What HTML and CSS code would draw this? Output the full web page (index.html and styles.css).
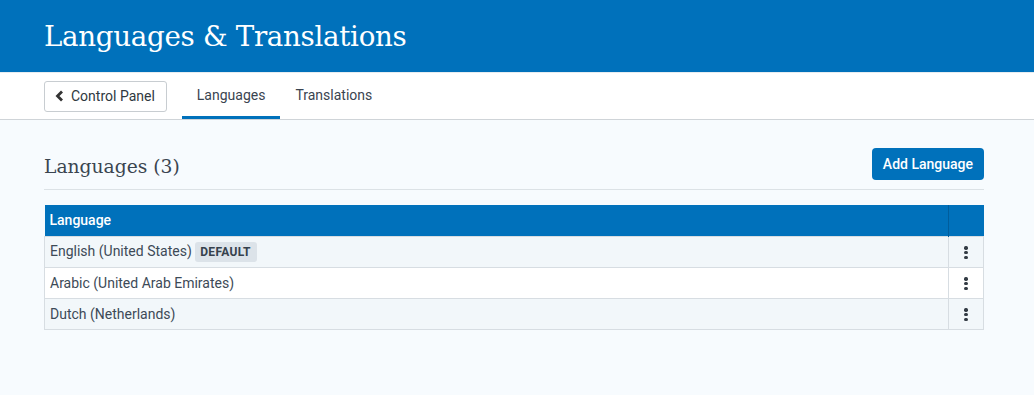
FILE: index.html
```html
<!DOCTYPE html>
<html lang="en">
<head>
  <meta charset="UTF-8" />
  <title>Languages &amp; Translations</title>
  <link rel="stylesheet" href="styles.css">
</head>
<body>

  <header class="page-header">
    <h1>Languages &amp; Translations</h1>
  </header>

  <nav class="tabs">
    <a class="back-btn" href="#">
      <svg width="10" height="12" viewBox="0 0 10 12"><path d="M7 1.5 L2.5 6 L7 10.5" fill="none" stroke="#333" stroke-width="2.8"/></svg>
      Control Panel
    </a>
    <a class="tab active" href="#">Languages</a>
    <a class="tab" href="#">Translations</a>
  </nav>

  <main class="content">
    <div class="section-head">
      <h2>Languages (3)</h2>
      <button class="btn-primary">Add Language</button>
    </div>

    <table class="grid">
      <thead>
        <tr><th>Language</th><th class="actions"></th></tr>
      </thead>
      <tbody>
        <tr>
          <td>English (United States) <span class="badge">DEFAULT</span></td>
          <td class="actions"><span class="kebab"><i></i><i></i><i></i></span></td>
        </tr>
        <tr>
          <td>Arabic (United Arab Emirates)</td>
          <td class="actions"><span class="kebab"><i></i><i></i><i></i></span></td>
        </tr>
        <tr>
          <td>Dutch (Netherlands)</td>
          <td class="actions"><span class="kebab"><i></i><i></i><i></i></span></td>
        </tr>
      </tbody>
    </table>
  </main>

</body>
</html>
```

FILE: styles.css
```css
body {
  margin: 0;
  font-family: Roboto, "Liberation Sans", sans-serif;
  font-size: 14px;
  color: #3d4a57;
  background: #f7fbfe;
}
.page-header {
  background: #0071bb;
  height: 72px;
  padding: 0 44px;
  display: flex;
  align-items: center;
}
.page-header h1 {
  margin: 0;
  color: #fff;
  font-family: "DejaVu Serif", serif;
  font-weight: normal;
  font-size: 27.7px;
  letter-spacing: -0.3px;
}
.tabs {
  background: #fff;
  height: 46px;
  border-top: 1px solid #e6ecf0;
  border-bottom: 1px solid #cfd4d8;
  padding: 0 44px;
  display: flex;
  align-items: center;
}
.back-btn {
  display: flex;
  align-items: center;
  gap: 6px;
  height: 29px;
  padding: 0 11px 0 10px;
  border: 1px solid #c8cdd1;
  border-radius: 3px;
  color: #2f3840;
  text-decoration: none;
  font-size: 14px;
  margin-right: 15px;
}
.tab {
  height: 46px;
  display: flex;
  align-items: center;
  padding: 0 15px;
  color: #3a4450;
  text-decoration: none;
  box-sizing: border-box;
  border-bottom: 3px solid transparent;
  padding-top: 1px;
}
.tab.active {
  border-bottom-color: #0071bb;
}
.content {
  padding: 28px 50px 0 44px;
}
.section-head {
  display: flex;
  justify-content: space-between;
  align-items: center;
  padding-bottom: 9px;
  border-bottom: 1px solid #dce2e6;
  margin-bottom: 15px;
}
.section-head h2 {
  margin: 0;
  font-family: "DejaVu Serif", serif;
  font-weight: normal;
  font-size: 18.7px;
  color: #3a4550;
  padding-top: 4px;
}
.btn-primary {
  background: #0071bb;
  color: #fff;
  border: none;
  border-radius: 4px;
  height: 32px;
  padding: 0 11px;
  font-family: Roboto, sans-serif;
  font-size: 14px;
  font-weight: 500;
}
.grid {
  width: 100%;
  border-collapse: collapse;
}
.grid th {
  background: #0071bb;
  color: #fff;
  text-align: left;
  font-weight: 500;
  height: 31px;
  padding: 0 5px;
  box-sizing: border-box;
}
.grid th.actions {
  border-left: 1px solid #005d9c;
}
.grid td {
  height: 31px;
  padding: 0 5px;
  border: 1px solid #d7dde2;
  box-sizing: border-box;
}
.grid tbody tr:nth-child(odd) {
  background: #f2f7fa;
}
.grid tbody tr:nth-child(even) {
  background: #fff;
}
.grid .actions {
  width: 35px;
  text-align: center;
}
.badge {
  display: inline-block;
  background: #dce3e9;
  color: #35414c;
  font-size: 12px;
  font-weight: 700;
  letter-spacing: 0.3px;
  padding: 3px 6px 3px 5px;
  border-radius: 3px;
}
.kebab {
  display: inline-flex;
  flex-direction: column;
  gap: 1.6px;
  vertical-align: middle;
}
.kebab i {
  width: 3.3px;
  height: 3.3px;
  border-radius: 50%;
  background: #333b44;
}
```
